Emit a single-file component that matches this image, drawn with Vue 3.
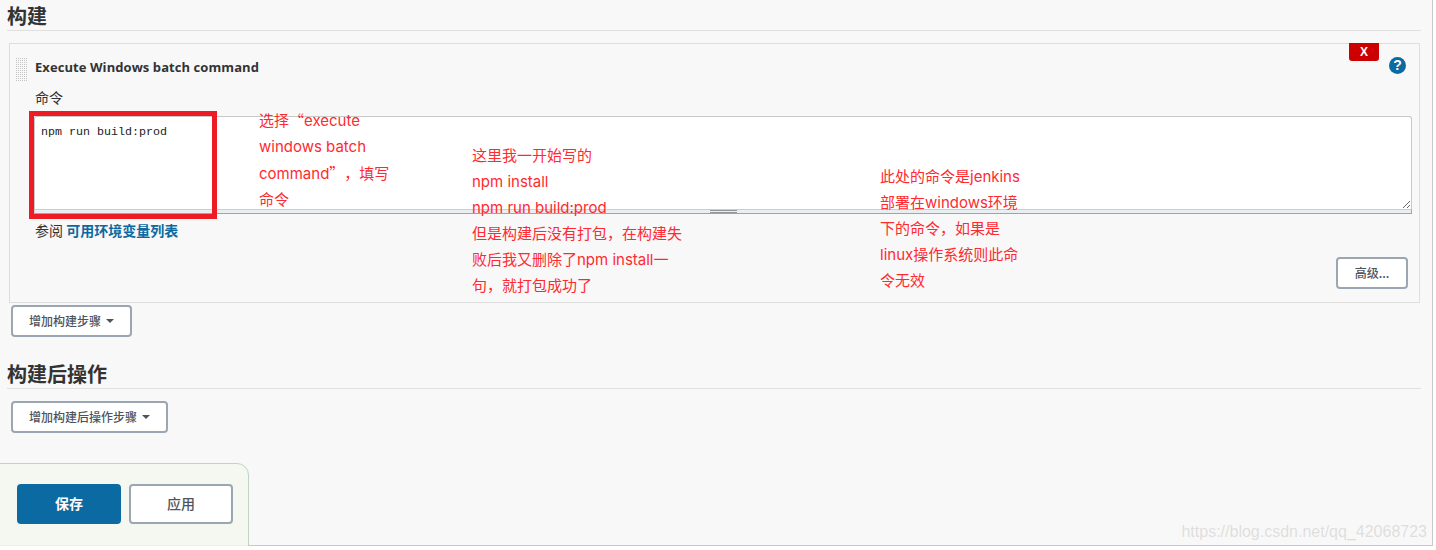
<template>
  <div class="page">
    <h2 class="section-title">构建</h2>

    <div class="panel">
      <div class="panel-head">
        <div class="grip"></div>
        <div class="panel-title">Execute Windows batch command</div>
        <button class="delete-btn">X</button>
        <span class="help-icon">?</span>
      </div>
      <div class="field-label">命令</div>
      <textarea class="command" spellcheck="false" readonly>npm run build:prod</textarea>
      <div class="grow-handle"><span class="handle-mark"></span></div>
      <div class="env-line">参阅 <a class="env-link">可用环境变量列表</a></div>
      <button class="btn advanced-btn">高级...</button>
    </div>

    <button class="btn add-btn step-btn">增加构建步骤<i class="caret"></i></button>

    <h2 class="section-title second">构建后操作</h2>

    <button class="btn add-btn post-btn">增加构建后操作步骤<i class="caret"></i></button>

    <div class="bottom-bar">
      <button class="save-btn">保存</button>
      <button class="btn apply-btn">应用</button>
    </div>

    <!-- annotations drawn on top of the screenshot -->
    <div class="red-box"></div>
    <div class="note note-a">
      <div>选择<span class="cjk">“</span>execute</div>
      <div>windows batch</div>
      <div>command<span class="cjk">”，</span>填写</div>
      <div>命令</div>
    </div>
    <div class="note note-b">
      <div v-for="line in noteB" :key="line">{{ line }}</div>
    </div>
    <div class="note note-c">
      <div v-for="line in noteC" :key="line">{{ line }}</div>
    </div>
    <div class="watermark">https://blog.csdn.net/qq_42068723</div>
  </div>
</template>

<script setup>
const noteB = [
  '这里我一开始写的',
  'npm install',
  'npm run build:prod',
  '但是构建后没有打包，在构建失',
  '败后我又删除了npm install一',
  '句，就打包成功了'
]

const noteC = ['此处的命令是jenkins', '部署在windows环境', '下的命令，如果是', 'linux操作系统则此命', '令无效']
</script>

<style>
html,
body {
  margin: 0;
  background: #fff;
  overflow: hidden;
}
</style>

<style scoped>
.page {
  position: relative;
  box-sizing: border-box;
  width: 1433px;
  height: 546px;
  background: #f8f8f8;
  border-right: 1px solid #c9c9c9;
  border-bottom: 1px solid #c9c9c9;
  font-family: "Noto Sans CJK SC", "Noto Sans", sans-serif;
  color: #333;
  display: flex;
  flex-direction: column;
  align-items: flex-start;
}

.page > * {
  flex-shrink: 0;
}

.section-title {
  box-sizing: border-box;
  width: 1414px;
  height: 31px;
  margin: 0 0 0 7px;
  border-bottom: 1px solid #e0e0e0;
  font-size: 20px;
  line-height: 32px;
  font-weight: 700;
  color: #333;
}

.section-title.second {
  margin-top: 21px;
}

.panel {
  box-sizing: border-box;
  width: 1411px;
  height: 260px;
  margin: 12px 0 0 9px;
  border: 1px solid #dedede;
  display: flex;
  flex-direction: column;
  align-items: flex-start;
}

.panel-head {
  display: flex;
  align-items: flex-start;
  width: 100%;
  height: 36px;
}

.grip {
  width: 12px;
  height: 24px;
  margin: 13px 0 0 5px;
  background-image:
    linear-gradient(#f8f8f8 1px, transparent 1px),
    linear-gradient(90deg, #f8f8f8 1px, #c4c4c4 1px);
  background-size: 2px 2px;
}

.panel-title {
  margin: 14px 0 0 8px;
  font-family: "Open Sans", "Noto Sans", sans-serif;
  font-size: 13px;
  letter-spacing: 0.07px;
  line-height: 18px;
  font-weight: 700;
  color: #333;
}

.delete-btn {
  width: 30px;
  height: 18px;
  margin: -1px 0 0 auto;
  padding: 1px 0 0;
  border: 0;
  border-radius: 0 0 3px 3px;
  background: #cc0000;
  color: #fff;
  font-family: "Liberation Sans", sans-serif;
  font-size: 12px;
  line-height: 17px;
  font-weight: 700;
}

.help-icon {
  width: 17px;
  height: 17px;
  margin: 13px 13px 0 10px;
  border-radius: 50%;
  background: #0b6aa2;
  color: #fff;
  font-family: "Liberation Sans", sans-serif;
  font-size: 14px;
  line-height: 17px;
  font-weight: 700;
  text-align: center;
}

.field-label {
  margin: 8px 0 0 25px;
  font-size: 14px;
  line-height: 18px;
}

.command {
  display: block;
  box-sizing: border-box;
  width: 1378px;
  height: 93px;
  margin: 10px 0 0 24px;
  padding: 7px 6px;
  border: 1px solid #c8c8c8;
  border-bottom: 0;
  border-radius: 3px 3px 0 0;
  outline: 0;
  background: #fff;
  font-family: "Liberation Mono", monospace;
  font-size: 11.67px;
  line-height: 16px;
  color: #222;
}

.grow-handle {
  box-sizing: border-box;
  width: 1378px;
  height: 5px;
  margin-left: 24px;
  background: #e9eef1;
  border-top: 1px solid #c8ced2;
  border-bottom: 1px solid #9aa7b3;
  border-left: 1px solid #c8ced2;
  border-right: 1px solid #9aa7b3;
  display: flex;
  justify-content: center;
}

.handle-mark {
  width: 27px;
  height: 3px;
  box-sizing: border-box;
  border-top: 1px solid #8f979c;
  border-bottom: 1px solid #8f979c;
}

.env-line {
  margin: 7px 0 0 25px;
  font-size: 14px;
  line-height: 18px;
}

.env-link {
  color: #0b6aa2;
  font-weight: 700;
}

.btn {
  box-sizing: border-box;
  padding: 0;
  border: 2px solid #9aa7b3;
  border-radius: 4px;
  background: #fff;
  color: #4d545d;
  font-family: "Noto Sans CJK SC", sans-serif;
  font-size: 12px;
  line-height: 28px;
}

.advanced-btn {
  align-self: flex-end;
  width: 72px;
  height: 32px;
  margin: 18px 11px 0 0;
  font-weight: 500;
}

.add-btn {
  display: flex;
  align-items: center;
  height: 32px;
  margin-left: 11px;
  padding-left: 16px;
  font-weight: 500;
}

.step-btn {
  width: 121px;
  margin-top: 2px;
}

.post-btn {
  width: 157px;
  margin-top: 12px;
}

.caret {
  width: 0;
  height: 0;
  margin-left: 5px;
  border-left: 4px solid transparent;
  border-right: 4px solid transparent;
  border-top: 4px solid #4d545d;
}

.bottom-bar {
  box-sizing: border-box;
  display: flex;
  gap: 8px;
  width: 250px;
  height: 87px;
  margin: 30px 0 0 -1px;
  padding: 20px 0 0 17px;
  background: rgba(244, 248, 240, 0.85);
  border: 1px solid #bfd4c4;
  border-radius: 0 12px 0 0;
}

.save-btn {
  width: 104px;
  height: 40px;
  padding: 0 0 2px;
  border: 0;
  border-radius: 4px;
  background: #0b6aa2;
  color: #fff;
  font-family: "Noto Sans CJK SC", sans-serif;
  font-size: 14px;
  font-weight: 700;
}

.apply-btn {
  width: 104px;
  height: 40px;
  padding-bottom: 2px;
  font-size: 14px;
  font-weight: 500;
}

.red-box {
  position: absolute;
  left: 29px;
  top: 111px;
  box-sizing: border-box;
  width: 188px;
  height: 108px;
  border: 5px solid #ed1c24;
}

.note {
  position: absolute;
  font-family: "Inter", "Noto Sans CJK SC", sans-serif;
  font-size: 15px;
  line-height: 26px;
  color: #ff2a30;
  white-space: nowrap;
  text-spacing-trim: space-all;
}

.cjk {
  font-family: "Noto Sans CJK SC", sans-serif;
}

.note-a {
  left: 259px;
  top: 107px;
}

.note-b {
  left: 472px;
  top: 143px;
}

.note-c {
  left: 880px;
  top: 164px;
}

.watermark {
  position: absolute;
  right: 5px;
  bottom: 3px;
  font-family: "Liberation Sans", sans-serif;
  font-size: 16px;
  line-height: 20px;
  color: rgba(190, 190, 190, 0.45);
}
</style>
